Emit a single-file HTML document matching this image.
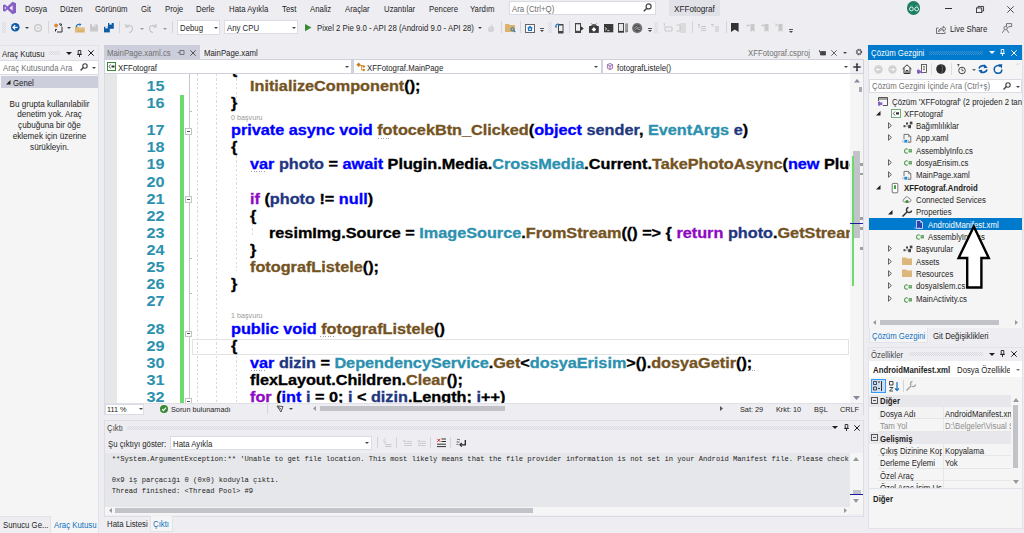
<!DOCTYPE html>
<html><head><meta charset="utf-8">
<style>
*{margin:0;padding:0;box-sizing:border-box}
html,body{width:1024px;height:533px;overflow:hidden;background:#eeeef2;font-family:"Liberation Sans",sans-serif;color:#1e1e1e}
.a{position:absolute}
.t{position:absolute;white-space:nowrap;line-height:1;font-size:8.3px;color:#1e1e1e;transform:translateY(-0.42px) scaleX(0.94);transform-origin:0 0}
.m{font-family:"Liberation Mono",monospace}
.sep{position:absolute;width:1px;background:#d3d4dc}
.grip{position:absolute;width:4px;background:repeating-conic-gradient(#d9dae1 0 25%,transparent 0 50%) 0 0/2px 2px}
.dd{position:absolute;width:0;height:0;border-left:2px solid transparent;border-right:2px solid transparent;border-top:2px solid #444}
svg{position:absolute;overflow:visible}
.cl{position:absolute;white-space:pre;line-height:1;font-weight:bold;font-size:14.1px;-webkit-text-stroke:0.3px currentColor;transform:scaleX(1.152);transform-origin:0 0}
.ln{position:absolute;left:120px;width:44.5px;text-align:right;white-space:pre;line-height:1;font-weight:bold;font-size:14.1px;color:#2b91af;transform:scaleX(1.152);transform-origin:100% 0}
.ob{position:absolute;left:185.4px;width:6.8px;height:6.6px;background:#fff;border:1px solid #c4c4c4}
.ob::after{content:"";position:absolute;left:1px;top:1.8px;width:2.8px;height:1px;background:#555}
.pb{position:absolute;left:870.5px;width:7px;height:7px;border:1px solid #555}
.pb::after{content:"";position:absolute;left:1px;top:2px;width:3px;height:1px;background:#555}
.du{position:absolute;height:1px;background:repeating-linear-gradient(90deg,#a0a0a0 0 1px,transparent 1px 2.6px)}
.gd{position:absolute;width:1px;background:repeating-linear-gradient(#dadada 0 2.2px,transparent 2.2px 4.4px)}

</style></head>
<body>
<!-- MENU BAR -->
<svg style="left:0;top:0" width="20" height="17" viewBox="0 0 20 17"><path d="M12.5 1.8 L16 3.3 V12.7 L12.5 14.2 L7.4 9.4 L4.6 11.7 L3 10.8 V5.2 L4.6 4.3 L7.4 6.6 Z M12.6 5.3 V10.7 L9.5 8 Z M4.8 6.6 V9.4 L6.3 8 Z" fill="#865fc5" fill-rule="evenodd"/></svg>
<div class="t" style="left:24.9px;top:4.6px">Dosya</div>
<div class="t" style="left:59.8px;top:4.6px">Düzen</div>
<div class="t" style="left:94.9px;top:4.6px">Görünüm</div>
<div class="t" style="left:140.8px;top:4.6px">Git</div>
<div class="t" style="left:164.8px;top:4.6px">Proje</div>
<div class="t" style="left:196.4px;top:4.6px">Derle</div>
<div class="t" style="left:228.7px;top:4.6px">Hata Ayıkla</div>
<div class="t" style="left:282.3px;top:4.6px">Test</div>
<div class="t" style="left:310px;top:4.6px">Analiz</div>
<div class="t" style="left:345.2px;top:4.6px">Araçlar</div>
<div class="t" style="left:383.8px;top:4.6px">Uzantılar</div>
<div class="t" style="left:429px;top:4.6px">Pencere</div>
<div class="t" style="left:469.8px;top:4.6px">Yardım</div>
<div class="a" style="left:509px;top:1px;width:147px;height:14px;background:#fff;border:1px solid #dadbe3"></div>
<div class="t" style="left:512px;top:4.6px;color:#6d6d6d">Ara (Ctrl+Q)</div>
<svg style="left:643px;top:3.4px" width="9" height="9" viewBox="0 0 9 9"><circle cx="5.6" cy="3.4" r="2.5" fill="none" stroke="#424242" stroke-width="1.2"/><path d="M3.8 5.2 L0.8 8.2" stroke="#424242" stroke-width="1.5"/></svg>
<div class="a" style="left:669px;top:0;width:51px;height:16px;background:#e1e2e8"></div>
<div class="t" style="left:674px;top:4.6px;font-size:8.7px">XFFotograf</div>
<div class="a" style="left:907px;top:1.3px;width:13.4px;height:13.4px;border-radius:50%;background:#1b7f64"></div>
<svg style="left:907px;top:1px" width="14" height="14" viewBox="0 0 14 14"><circle cx="4.4" cy="8" r="1.9" fill="none" stroke="#fff" stroke-width="0.85"/><circle cx="9.6" cy="8" r="1.9" fill="none" stroke="#fff" stroke-width="0.85"/><path d="M3.6 4.9 H4.2 M4.8 4.9 H5.4 M8.8 4.9 H9.4 M10 4.9 H10.6" stroke="#fff" stroke-width="0.7"/></svg>
<div class="a" style="left:945px;top:8.2px;width:6.8px;height:0.9px;background:#333"></div>
<svg style="left:975.5px;top:5.8px" width="8" height="7" viewBox="0 0 8 7"><rect x="0.45" y="1.95" width="5.3" height="4.6" fill="none" stroke="#333" stroke-width="0.9"/><path d="M2 1.9 V0.45 H7.55 V5 H5.8" fill="none" stroke="#333" stroke-width="0.9"/></svg>
<svg style="left:1007px;top:6.2px" width="7" height="7" viewBox="0 0 7 7"><path d="M0.3 0.3 L6.7 6.7 M6.7 0.3 L0.3 6.7" stroke="#333" stroke-width="0.85"/></svg>

<!-- TOOLBAR -->
<div class="grip" style="left:2px;top:22px;height:11px"></div>
<svg style="left:11.4px;top:23.3px" width="9" height="9" viewBox="0 0 9 9"><circle cx="4.3" cy="4.3" r="4.3" fill="#0e5ca8"/><path d="M2 4.3 H6.6 M4.2 2.1 L2 4.3 L4.2 6.5" fill="none" stroke="#fff" stroke-width="1.2"/></svg>
<div class="dd" style="left:25px;top:27px"></div>
<svg style="left:33.6px;top:23.5px" width="8" height="8" viewBox="0 0 8 8"><circle cx="4" cy="4" r="3.4" fill="none" stroke="#c6c6c6" stroke-width="1.2"/><path d="M2.4 4 H5.6" stroke="#c6c6c6" stroke-width="1"/></svg>
<div class="sep" style="left:47.5px;top:21px;height:12px"></div>
<svg style="left:53.5px;top:22.5px" width="9" height="10" viewBox="0 0 9 10"><circle cx="2.1" cy="2.5" r="1.9" fill="#d9892f"/><path d="M5 1 H7.5 V2.5 M8 4 V9 H3 M1.5 6 V8.5 M1 6.5 H3" fill="none" stroke="#333" stroke-width="1"/><path d="M5.5 1.5 L7.5 3.5" stroke="#333" stroke-width="0.8"/></svg>
<div class="dd" style="left:67.3px;top:27px"></div>
<svg style="left:75px;top:23px" width="10" height="10" viewBox="0 0 10 10"><path d="M0 3.5 H3 L4 4.5 H9.8 V9.5 H0 Z" fill="#dcb36c"/><path d="M0.5 9.3 L2 6 H9.8" fill="none" stroke="#eed9a8" stroke-width="0.6"/><path d="M1.3 4 C1.3 2 3 1 5 1.5" fill="none" stroke="#1c75c4" stroke-width="1.1"/><path d="M4.5 0 L6.5 1.6 L4.5 3.2 Z" fill="#1c75c4"/></svg>
<svg style="left:90.4px;top:23.9px" width="8" height="8" viewBox="0 0 8 8"><path d="M0 0 H6.5 L8 1.5 V7.6 H0 Z" fill="#c9c9c9"/><rect x="2" y="0" width="3.5" height="2.5" fill="#eeeef2"/><rect x="4.3" y="0.5" width="0.8" height="1.5" fill="#c9c9c9"/></svg>
<svg style="left:104px;top:23px" width="10" height="10" viewBox="0 0 10 10"><path d="M4 0 H9.8 V5.8 H4 Z" fill="#0e5ca8"/><path d="M0 3.8 H5.8 V9.4 H0 Z" fill="#0e5ca8"/><rect x="5.3" y="0" width="2.4" height="1.6" fill="#eeeef2"/><rect x="1.3" y="3.8" width="2.4" height="1.6" fill="#eeeef2"/></svg>
<div class="sep" style="left:118.6px;top:21px;height:12px"></div>
<svg style="left:124.5px;top:23px" width="9" height="10" viewBox="0 0 9 10"><path d="M1 1 V4 H4 M1.3 3.8 C3 1.5 7.5 2 7.5 5.5 C7.5 7.5 6 9 4 9.5" fill="none" stroke="#c4c4c4" stroke-width="1.1"/></svg>
<div class="dd" style="left:139.8px;top:28px;border-top-color:#999"></div>
<svg style="left:148px;top:23px" width="9" height="10" viewBox="0 0 9 10"><path d="M8 1 V4 H5 M7.7 3.8 C6 1.5 1.5 2 1.5 5.5 C1.5 7.5 3 9 5 9.5" fill="none" stroke="#c4c4c4" stroke-width="1.1"/></svg>
<div class="dd" style="left:163.3px;top:28px;border-top-color:#999"></div>
<div class="sep" style="left:171.6px;top:21px;height:12px"></div>
<div class="a" style="left:176.6px;top:20.4px;width:43px;height:14.2px;background:#fff;border:1px solid #dadbe3"></div>
<div class="t" style="left:179.8px;top:24px">Debug</div>
<div class="dd" style="left:213.5px;top:27px"></div>
<div class="a" style="left:224.4px;top:20.4px;width:74px;height:14px;background:#fff;border:1px solid #dadbe3"></div>
<div class="t" style="left:227px;top:24px">Any CPU</div>
<div class="dd" style="left:291.7px;top:27px"></div>
<svg style="left:305px;top:23.9px" width="7" height="8" viewBox="0 0 7 8"><path d="M0 0 L6.5 3.6 L0 7.2 Z" fill="#388a34"/></svg>
<div class="t" style="left:316.7px;top:24px">Pixel 2 Pie 9.0 - API 28 (Android 9.0 - API 28)</div>
<div class="dd" style="left:477.8px;top:27px"></div>
<svg style="left:487px;top:23px" width="8" height="10" viewBox="0 0 8 10"><path d="M4 0 C5 3 8 4 7 7.5 C6.5 9.5 1.5 9.5 1 7.5 C0.5 5.5 2 4.5 2.5 3 C3.5 5 4.5 3 4 0Z" fill="#d4d4d6"/></svg>
<div class="sep" style="left:500.9px;top:21px;height:12px"></div>
<svg style="left:505px;top:23px" width="11" height="10" viewBox="0 0 11 10"><path d="M0 1 H4 L5 2 H10 V9 H0 Z" fill="#dcb36c"/><circle cx="7.5" cy="6.3" r="1.6" fill="none" stroke="#1c75c4" stroke-width="1"/><path d="M8.6 7.4 L10.2 9" stroke="#1c75c4" stroke-width="1.2"/></svg>
<div class="sep" style="left:520.3px;top:21px;height:12px"></div>
<svg style="left:525px;top:23.5px" width="10" height="9" viewBox="0 0 10 9"><rect x="0.5" y="0.5" width="9" height="8" fill="#f5f5f5" stroke="#666" stroke-width="1"/><path d="M5 1.8 L8 4.3 H7 V7 H3 V4.3 H2 Z" fill="#1c75c4"/><rect x="4" y="4.5" width="2" height="1.2" fill="#fff"/></svg>
<div class="a" style="left:540px;top:28px;width:4px;height:1px;background:#555"></div>
<div class="dd" style="left:540px;top:30px"></div>
<div class="grip" style="left:547.6px;top:22px;height:11px"></div>
<svg style="left:554.6px;top:22.5px" width="9" height="11" viewBox="0 0 9 11"><rect x="3" y="1" width="5.5" height="9.5" fill="#444"/><rect x="4" y="2.5" width="3.5" height="5.5" fill="#eee"/><path d="M0.8 4 C0.5 1.5 2.5 0.5 4 1.5" fill="none" stroke="#1c75c4" stroke-width="1.2"/><path d="M0 3.5 L1 5.2 L2.2 3.5 Z" fill="#1c75c4"/></svg>
<div class="sep" style="left:569.4px;top:21px;height:12px"></div>
<svg style="left:575px;top:23px" width="9" height="10" viewBox="0 0 9 10"><rect x="0" y="0" width="6" height="10" fill="#444"/><rect x="1" y="1.3" width="4" height="6.5" fill="#eee"/><path d="M5.5 3 L8.8 5.5 L5.5 8 Z" fill="#333"/></svg>
<svg style="left:589px;top:22.8px" width="10" height="10" viewBox="0 0 10 10"><path d="M2.2 0.3 L3.2 1.5 M7.8 0.3 L6.8 1.5 M2.3 2.8 C2.8 1 7.2 1 7.7 2.8 Z" fill="#444" stroke="#444" stroke-width="0.6"/><rect x="0" y="3" width="9.8" height="6.9" fill="#3a3a3a"/><path d="M4.9 4 L7.2 6.4 L4.9 8.8 L2.6 6.4 Z" fill="#fff"/></svg>
<svg style="left:604px;top:24.4px" width="9.5" height="8.5" viewBox="0 0 9.5 8.5"><rect x="0" y="0" width="9.3" height="8.3" fill="#3a3a3a"/><path d="M1.1 3.6 L2.7 4.9 L1.1 6.2 M3.3 6.6 H5.3" stroke="#fff" stroke-width="0.8" fill="none"/></svg>
<svg style="left:618px;top:23px" width="11" height="10" viewBox="0 0 11 10"><rect x="0" y="0" width="6" height="9.7" fill="#3a3a3a"/><rect x="0.9" y="0.9" width="4.2" height="7" fill="#e6e6e8"/><path d="M7.2 0.5 H10 V9 L7.2 9.5 Z" fill="#888"/><path d="M7.8 2 H9.5 M7.8 4 H9.5 M7.8 6 H9.5" stroke="#ddd" stroke-width="0.6"/></svg>
<svg style="left:632.2px;top:22.8px" width="11" height="11" viewBox="0 0 11 11"><circle cx="5.2" cy="5.2" r="5.1" fill="#777"/><circle cx="5.2" cy="5.2" r="3.6" fill="#555"/><path d="M2.2 5.5 L4.5 3.2 L6.5 5.2 L8.2 3.5 M2.8 7.2 L5 5 L7 7 L8.5 5.5" fill="none" stroke="#bbb" stroke-width="0.7"/></svg>
<div class="a" style="left:647.7px;top:28px;width:4px;height:1px;background:#555"></div>
<div class="dd" style="left:647.7px;top:30px"></div>
<div class="grip" style="left:654.4px;top:22px;height:11px"></div>
<svg style="left:662.7px;top:23px" width="10" height="10" viewBox="0 0 10 10"><path d="M1 0 L1.5 3 M2 4 H9 V8 H2 Z" fill="none" stroke="#c8c8c8" stroke-width="1"/></svg>
<svg style="left:676.4px;top:23px" width="11" height="10" viewBox="0 0 11 10"><path d="M0.5 2 H4 V8 H0.5 M5 0 V10 M6 1 H10 M6 3 H10 M6 5 H10 M6 7 H10 M6 9 H10" fill="none" stroke="#c8c8c8" stroke-width="1"/></svg>
<div class="sep" style="left:691.7px;top:21px;height:12px"></div>
<svg style="left:698.4px;top:24px" width="8" height="8" viewBox="0 0 8 8"><path d="M0 0.5 H2 M3 2.5 H8 M3 4.5 H8 M3 6.5 H8 M1 1 V4" stroke="#c8c8c8" stroke-width="1"/></svg>
<svg style="left:711px;top:24px" width="8" height="8" viewBox="0 0 8 8"><path d="M0 0.5 H3 M4 3 H8 M4 5 H8 M4 7 H8 M1 1.5 L2.5 3" stroke="#c8c8c8" stroke-width="1"/></svg>
<div class="sep" style="left:725.7px;top:21px;height:12px"></div>
<svg style="left:731.4px;top:23px" width="8" height="9" viewBox="0 0 8 9"><path d="M0 0 H7.6 V9 L3.8 6.5 L0 9 Z" fill="#333"/></svg>
<svg style="left:747.3px;top:23px" width="8" height="9" viewBox="0 0 8 9"><path d="M3.5 1 H7.5 V9 L5.5 7.5 L3.5 9 Z" fill="#c8c8c8"/><path d="M0 2.5 H3 M1.3 1 L0 2.5 L1.3 4" stroke="#c8c8c8" stroke-width="0.9" fill="none"/></svg>
<svg style="left:761.2px;top:23px" width="8" height="9" viewBox="0 0 8 9"><path d="M3.5 1 H7.5 V9 L5.5 7.5 L3.5 9 Z" fill="#c8c8c8"/><path d="M0 2.5 H3 M1.7 1 L3 2.5 L1.7 4" stroke="#c8c8c8" stroke-width="0.9" fill="none"/></svg>
<svg style="left:775.2px;top:23px" width="8" height="9" viewBox="0 0 8 9"><path d="M3.5 1 H7.5 V9 L5.5 7.5 L3.5 9 Z" fill="#c8c8c8"/><path d="M0 0.5 L3 3.5 M3 0.5 L0 3.5" stroke="#c8c8c8" stroke-width="0.9"/></svg>
<div class="a" style="left:789.4px;top:28.5px;width:4px;height:1px;background:#555"></div>
<div class="dd" style="left:789.4px;top:30.5px"></div>
<svg style="left:936px;top:24.5px" width="11" height="9" viewBox="0 0 11 9"><path d="M2.5 3 H0.5 V8.5 H9 V6.5" fill="none" stroke="#555" stroke-width="0.8"/><path d="M2.5 6.8 C2.8 4 4.8 3 7.3 3 V1.2 L10 3.8 L7.3 6.4 V4.6 C5.5 4.6 3.8 5.3 2.5 6.8 Z" fill="none" stroke="#555" stroke-width="0.8"/></svg>
<div class="t" style="left:950px;top:25.3px">Live Share</div>
<svg style="left:1002px;top:23px" width="10" height="10" viewBox="0 0 10 10"><circle cx="3.6" cy="5" r="1.7" fill="none" stroke="#555" stroke-width="0.8"/><path d="M0.3 9.8 L2.5 6.6 M6.9 9.8 L4.7 6.6" stroke="#555" stroke-width="0.8"/><path d="M4.5 3.2 V0.6 H9.6 V3.6 H7 L5.8 4.6" fill="none" stroke="#555" stroke-width="0.8"/></svg>


<!-- LEFT PANEL -->
<div class="a" style="left:0;top:45px;width:99px;height:472px;background:#f5f5f5;border:1px solid #e2e3ea;border-left:0"></div>
<div class="a" style="left:0;top:46px;width:98px;height:14px;background:#eeeef2"></div>
<div class="t" style="left:2.2px;top:49.5px">Araç Kutusu</div>
<div class="grip" style="left:49px;top:51px;height:4px;width:11px"></div>
<div class="dd" style="left:65.5px;top:51.5px;border-width:3px 3px 0 3px;border-top-color:#1e1e1e"></div>
<svg style="left:76.8px;top:49.5px" width="5" height="7" viewBox="0 0 5 7"><path d="M1.2 0.5 H3.8 V4.3 H1.2 Z M0.2 4.5 H4.8 M2.5 4.5 V7" fill="none" stroke="#1e1e1e" stroke-width="0.9"/></svg>
<svg style="left:88.1px;top:50.1px" width="6" height="6" viewBox="0 0 6 6"><path d="M0.3 0.3 L5.7 5.7 M5.7 0.3 L0.3 5.7" stroke="#1e1e1e" stroke-width="1"/></svg>
<div class="a" style="left:0;top:60px;width:99px;height:14.5px;background:#fff;border:1px solid #dadbe3;border-left:0"></div>
<div class="t" style="left:2.5px;top:63.8px;color:#717171">Araç Kutusunda Ara</div>
<svg style="left:80px;top:63px" width="8" height="8" viewBox="0 0 8 8"><circle cx="5" cy="3" r="2.2" fill="none" stroke="#424242" stroke-width="1.1"/><path d="M3.4 4.6 L0.6 7.4" stroke="#424242" stroke-width="1.4"/></svg>
<div class="dd" style="left:92px;top:67px"></div>
<div class="a" style="left:1px;top:76px;width:97px;height:12.2px;background:#cccedb"></div>
<svg style="left:5.5px;top:80px" width="5" height="5" viewBox="0 0 5 5"><path d="M4.5 0 V4.5 H0 Z" fill="#1e1e1e"/></svg>
<div class="t" style="left:12.8px;top:79.3px">Genel</div>
<div class="a" style="left:0;top:99.6px;width:99px;text-align:center;font-size:8.15px;line-height:10.75px;color:#1e1e1e">Bu grupta kullanılabilir<br>denetim yok. Araç<br>çubuğuna bir öğe<br>eklemek için üzerine<br>sürükleyin.</div>
<div class="a" style="left:0;top:516.7px;width:50.5px;height:17px;background:#eeeef2;border-right:1px solid #e2e3ea"></div>
<div class="t" style="left:3px;top:520.5px;color:#1e1e1e">Sunucu Ge...</div>
<div class="a" style="left:50.5px;top:516px;width:48.5px;height:17px;background:#f5f5f5;border-right:1px solid #e2e3ea"></div>
<div class="t" style="left:53.5px;top:520.5px;color:#0e70c0">Araç Kutusu</div>
<!-- EDITOR -->
<div class="a" style="left:104px;top:45px;width:96px;height:14.5px;background:#cccedb"></div>
<div class="t" style="left:107px;top:48.8px;color:#717171">MainPage.xaml.cs</div>
<svg style="left:177px;top:49px" width="8" height="7" viewBox="0 0 8 7"><path d="M0.5 3.5 H3 M3 1 V6 M3 1.5 H7 V5.5 H3" fill="none" stroke="#6d6d6d" stroke-width="0.9"/></svg>
<svg style="left:190.1px;top:49.6px" width="6" height="6" viewBox="0 0 6 6"><path d="M0.3 0.3 L5.7 5.7 M5.7 0.3 L0.3 5.7" stroke="#555" stroke-width="1"/></svg>
<div class="t" style="left:203.7px;top:48.8px">MainPage.xaml</div>
<div class="t" style="left:748px;top:48.8px;color:#717171">XFFotograf.csproj</div>
<svg style="left:818.5px;top:49.5px" width="7" height="6" viewBox="0 0 7 6"><path d="M0.5 0 V2.5 M1.5 1.5 H6.5 V5 H1.5 Z" fill="#444" stroke="#444" stroke-width="0.8"/></svg>
<svg style="left:831px;top:49.5px" width="6" height="6" viewBox="0 0 6 6"><path d="M0.3 0.3 L5.7 5.7 M5.7 0.3 L0.3 5.7" stroke="#555" stroke-width="0.9"/></svg>
<div class="dd" style="left:843.2px;top:51.8px;border-width:2.5px 2.5px 0 2.5px;border-top-color:#444"></div>
<svg style="left:854.5px;top:48px" width="8" height="8" viewBox="0 0 8 8"><circle cx="4" cy="4" r="2.5" fill="none" stroke="#555" stroke-width="1.4" stroke-dasharray="1.3 0.7"/><circle cx="4" cy="4" r="1.9" fill="none" stroke="#555" stroke-width="0.7"/></svg>
<!-- editor frame -->
<div class="a" style="left:103.5px;top:59px;width:760.5px;height:356px;background:#fff;border:1px solid #d9dae2"></div>
<!-- nav bar -->
<div class="a" style="left:103.5px;top:59px;width:760.5px;height:15px;background:#cfd1dc;border:1px solid #cfd1dc"></div>
<div class="a" style="left:850.3px;top:60px;width:13px;height:13.2px;background:#f0f0f4"></div>
<div class="a" style="left:105px;top:60px;width:245.5px;height:13.2px;background:#fff"></div>
<div class="a" style="left:353.5px;top:60px;width:247.5px;height:13.2px;background:#fff"></div>
<div class="a" style="left:603px;top:60px;width:247.3px;height:13.2px;background:#fff"></div>
<svg style="left:107px;top:62px" width="9" height="9" viewBox="0 0 9 9"><rect x="0.5" y="0.5" width="8" height="8" fill="#fff" stroke="#388a34" stroke-width="1"/><path d="M3.5 2.5 L2 4.5 L3.5 6.5" fill="none" stroke="#333" stroke-width="0.8"/><rect x="4.5" y="3.5" width="3" height="2" fill="#333"/></svg>
<div class="t" style="left:118px;top:63.5px">XFFotograf</div>
<div class="dd" style="left:345px;top:66px"></div>
<svg style="left:356px;top:61.5px" width="10" height="10" viewBox="0 0 10 10"><path d="M2.6 0.6 L4.8 2.8 L2.6 5 L0.4 2.8 Z M7.8 3 L9.3 4.5 L7.8 6 L6.3 4.5 Z M7.8 6.5 L9.3 8 L7.8 9.5 L6.3 8 Z" fill="#c98018"/><path d="M4.2 3.5 H7 M5.6 3.5 V8 H7" fill="none" stroke="#c98018" stroke-width="0.8"/></svg>
<div class="t" style="left:366.6px;top:63.5px">XFFotograf.MainPage</div>
<div class="dd" style="left:594px;top:66px"></div>
<svg style="left:606.5px;top:63px" width="6" height="7" viewBox="0 0 6 7"><path d="M3 0.4 L5.6 1.7 V5.3 L3 6.6 L0.4 5.3 V1.7 Z M0.4 1.7 L3 3 L5.6 1.7 M3 3 V6.6" fill="#efe4f7" stroke="#6c2d8a" stroke-width="0.6"/></svg>
<div class="t" style="left:616.6px;top:63.5px">fotografListele()</div>
<div class="dd" style="left:843.5px;top:66px"></div>
<svg style="left:852.5px;top:63px" width="8" height="8.5" viewBox="0 0 8 8.5"><path d="M4 0.8 V7.7 M0.3 4.1 H7.7" fill="none" stroke="#333" stroke-width="1.5"/><path d="M2.6 1.6 L4 0 L5.4 1.6 Z M2.6 6.9 L4 8.5 L5.4 6.9 Z" fill="#333"/></svg>
<!-- gutter -->
<div class="a" style="left:105px;top:74px;width:12px;height:329px;background:#e6e7e8"></div>
<div class="a" style="left:179.8px;top:94.9px;width:3.8px;height:308px;background:#6bdc6b"></div>
<div class="a" style="left:188.5px;top:74px;width:1.3px;height:329px;background:#c8c8c8"></div>
<div class="a" style="left:189px;top:111.4px;width:3px;height:1px;background:#c0c0c0"></div>
<div class="a" style="left:189px;top:293px;width:3px;height:1px;background:#c0c0c0"></div>
<div class="ob" style="top:128.1px"></div>
<div class="ob" style="top:196.3px"></div>
<div class="ob" style="top:330.5px"></div>
<div class="ob" style="top:398.2px"></div>
<div class="a" style="left:189px;top:258.3px;width:3px;height:1px;background:#c0c0c0"></div>
<!-- guides -->
<div class="gd" style="left:196.9px;top:74px;height:329px"></div>
<div class="gd" style="left:215.5px;top:74px;height:329px"></div>
<div class="gd" style="left:235.6px;top:74px;height:30px"></div>
<div class="gd" style="left:235.6px;top:156px;height:115px"></div>
<div class="gd" style="left:252px;top:224px;height:13px"></div>
<div class="gd" style="left:235.6px;top:356px;height:47px"></div>
<!-- vertical scrollbar -->
<div class="a" style="left:850.3px;top:74px;width:13px;height:329px;background:#f5f5f5"></div>
<svg style="left:853.8px;top:79px" width="6" height="3.5" viewBox="0 0 6 3.5"><path d="M0 3.5 L3 0 L6 3.5 Z" fill="#868999"/></svg>
<svg style="left:853px;top:396px" width="7" height="4" viewBox="0 0 7 4"><path d="M0 0 L3.5 4 L7 0 Z" fill="#868999"/></svg>
<div class="a" style="left:859px;top:86.5px;width:3px;height:5.7px;background:#a8a8ae"></div>
<div class="a" style="left:852.9px;top:150.7px;width:7px;height:87.8px;background:#c2c3c9"></div>
<div class="a" style="left:852px;top:155.5px;width:2px;height:130.5px;background:#6bdc6b"></div>
<div class="a" style="left:850px;top:222.5px;width:13px;height:1.3px;background:#1a1aa6"></div>
<div class="a" style="left:859.5px;top:163px;width:3px;height:2.5px;background:#a0a0a0"></div>
<div class="a" style="left:859.5px;top:172.5px;width:3px;height:2.5px;background:#a0a0a0"></div>
<div class="a" style="left:859.5px;top:217px;width:3px;height:2.5px;background:#a0a0a0"></div>
<div class="a" style="left:859.5px;top:227px;width:3px;height:2.5px;background:#a0a0a0"></div>
<div class="a" style="left:859.5px;top:247px;width:3px;height:2.5px;background:#a0a0a0"></div>
<!-- status row -->
<div class="a" style="left:105px;top:402.5px;width:758px;height:12px;background:#eeeef2;border-top:1px solid #e0e0e6"></div>
<div class="a" style="left:104.5px;top:403.5px;width:39px;height:11px;background:#fff;border:1px solid #dadbe3"></div>
<div class="t" style="left:106.5px;top:406px;font-size:7.75px">111 %</div>
<div class="dd" style="left:138.5px;top:408px"></div>
<svg style="left:160px;top:404.5px" width="8" height="8" viewBox="0 0 8 8"><circle cx="4" cy="4" r="4" fill="#388a34"/><path d="M2 4.2 L3.4 5.6 L6 2.6" fill="none" stroke="#fff" stroke-width="1.1"/></svg>
<div class="t" style="left:171px;top:406px;font-size:7.75px">Sorun bulunamadı</div>
<div class="sep" style="left:267.4px;top:404px;height:10px"></div>
<svg style="left:276px;top:404.5px" width="8" height="8" viewBox="0 0 8 8"><path d="M1 1 L7 1.5 L5 7 Z" fill="none" stroke="#444" stroke-width="0.9"/><path d="M2 2 L5 4" stroke="#444" stroke-width="0.9"/></svg>
<div class="dd" style="left:289px;top:408px"></div>
<svg style="left:313px;top:406px" width="3" height="5" viewBox="0 0 3 5"><path d="M3 0 L0 2.5 L3 5 Z" fill="#999"/></svg>
<div class="a" style="left:319.5px;top:406.3px;width:185.5px;height:5px;background:#c2c3c9"></div>
<svg style="left:719.5px;top:406px" width="3" height="5" viewBox="0 0 3 5"><path d="M0 0 L3 2.5 L0 5 Z" fill="#555"/></svg>
<div class="t" style="left:740.3px;top:405.8px;font-size:7.75px">Sat: 29</div>
<div class="t" style="left:775.7px;top:405.8px;font-size:7.75px">Krkt: 10</div>
<div class="t" style="left:814.4px;top:405.8px;font-size:7.75px">BŞL</div>
<div class="t" style="left:839.7px;top:405.8px;font-size:7.75px">CRLF</div>

<div class="a" style="left:192px;top:74px;width:658px;height:328.5px;overflow:hidden">
<div class="a" style="left:0;top:265.0px;width:657px;height:15.5px;border:1px solid #e3e3e3"></div>
<div class="cl" style="left:39.0px;top:-11.94px"><span style="color:#000000">{</span></div>
<div class="cl" style="left:58.4px;top:4.66px"><span style="color:#74531f">InitializeComponent</span><span style="color:#000000">();</span></div>
<div class="cl" style="left:39.0px;top:21.76px"><span style="color:#000000">}</span></div>
<div class="cl" style="left:39.0px;top:49.26px"><span style="color:#0000ff">private async void </span><span style="color:#74531f">fotocekBtn_Clicked</span><span style="color:#000000">(</span><span style="color:#0000ff">object</span><span style="color:#1f377f"> sender</span><span style="color:#000000">, </span><span style="color:#2b91af">EventArgs</span><span style="color:#1f377f"> e</span><span style="color:#000000">)</span></div>
<div class="cl" style="left:39.0px;top:66.36px"><span style="color:#000000">{</span></div>
<div class="cl" style="left:58.4px;top:83.46px"><span style="color:#0000ff">var</span><span style="color:#1f377f"> photo</span><span style="color:#000000"> = </span><span style="color:#0000ff">await</span><span style="color:#000000"> Plugin.Media.</span><span style="color:#2b91af">CrossMedia</span><span style="color:#000000">.Current.</span><span style="color:#74531f">TakePhotoAsync</span><span style="color:#000000">(</span><span style="color:#0000ff">new</span><span style="color:#000000"> PluginMedia</span></div>
<div class="cl" style="left:58.4px;top:117.66px"><span style="color:#8f08c4">if</span><span style="color:#000000"> (</span><span style="color:#1f377f">photo</span><span style="color:#000000"> != </span><span style="color:#0000ff">null</span><span style="color:#000000">)</span></div>
<div class="cl" style="left:58.4px;top:134.76px"><span style="color:#000000">{</span></div>
<div class="cl" style="left:77.0px;top:151.86px"><span style="color:#000000">resimImg.Source = </span><span style="color:#2b91af">ImageSource</span><span style="color:#000000">.</span><span style="color:#74531f">FromStream</span><span style="color:#000000">(() =&gt; { </span><span style="color:#8f08c4">return</span><span style="color:#1f377f"> photo</span><span style="color:#000000">.</span><span style="color:#74531f">GetStream</span><span style="color:#000000">());</span></div>
<div class="cl" style="left:58.4px;top:168.96px"><span style="color:#000000">}</span></div>
<div class="cl" style="left:58.4px;top:186.06px"><span style="color:#74531f">fotografListele</span><span style="color:#000000">();</span></div>
<div class="cl" style="left:39.0px;top:203.16px"><span style="color:#000000">}</span></div>
<div class="cl" style="left:39.0px;top:247.76px"><span style="color:#0000ff">public void </span><span style="color:#74531f">fotografListele</span><span style="color:#000000">()</span></div>
<div class="cl" style="left:39.0px;top:264.86px"><span style="color:#000000">{</span></div>
<div class="cl" style="left:58.4px;top:281.96px"><span style="color:#0000ff">var</span><span style="color:#1f377f"> dizin</span><span style="color:#000000"> = </span><span style="color:#2b91af">DependencyService</span><span style="color:#000000">.</span><span style="color:#74531f">Get</span><span style="color:#000000">&lt;</span><span style="color:#2b91af">dosyaErisim</span><span style="color:#000000">&gt;().</span><span style="color:#74531f">dosyaGetir</span><span style="color:#000000">();</span></div>
<div class="cl" style="left:58.4px;top:299.06px"><span style="color:#000000">flexLayout.Children.</span><span style="color:#74531f">Clear</span><span style="color:#000000">();</span></div>
<div class="cl" style="left:58.4px;top:316.16px"><span style="color:#8f08c4">for</span><span style="color:#000000"> (</span><span style="color:#0000ff">int</span><span style="color:#1f377f"> i</span><span style="color:#000000"> = 0; </span><span style="color:#1f377f">i</span><span style="color:#000000"> &lt; </span><span style="color:#1f377f">dizin</span><span style="color:#000000">.Length; </span><span style="color:#1f377f">i</span><span style="color:#000000">++)</span></div>
</div>
<div class="ln" style="top:78.66px">15</div>
<div class="ln" style="top:95.76px">16</div>
<div class="ln" style="top:123.26px">17</div>
<div class="ln" style="top:140.36px">18</div>
<div class="ln" style="top:157.46px">19</div>
<div class="ln" style="top:174.56px">20</div>
<div class="ln" style="top:191.66px">21</div>
<div class="ln" style="top:208.76px">22</div>
<div class="ln" style="top:225.86px">23</div>
<div class="ln" style="top:242.96px">24</div>
<div class="ln" style="top:260.06px">25</div>
<div class="ln" style="top:277.16px">26</div>
<div class="ln" style="top:294.26px">27</div>
<div class="ln" style="top:321.76px">28</div>
<div class="ln" style="top:338.86px">29</div>
<div class="ln" style="top:355.96px">30</div>
<div class="ln" style="top:373.06px">31</div>
<div class="ln" style="top:390.16px">32</div>
<div class="du" style="left:377.8px;top:137.5px;width:13.5px"></div>
<div class="du" style="left:250.5px;top:171.4px;width:16.5px"></div>
<div class="du" style="left:320px;top:336px;width:13.5px"></div>
<div class="du" style="left:250.5px;top:370px;width:16.5px"></div>
<div class="du" style="left:749px;top:370px;width:8px"></div>
<!-- OUTPUT PANEL -->
<div class="a" style="left:231px;top:113.6px;font-size:7.2px;line-height:1;color:#9a9a9a;white-space:nowrap">0 başvuru</div>
<div class="a" style="left:231px;top:312px;font-size:7.2px;line-height:1;color:#9a9a9a;white-space:nowrap">1 başvuru</div>
<div class="a" style="left:104px;top:419.5px;width:760px;height:97.5px;background:#eeeef2;border:1px solid #dcdde5"></div>
<div class="t" style="left:107px;top:424px;color:#444">Çıktı</div>
<div class="grip" style="left:127px;top:425.5px;height:4px;width:706px"></div>
<div class="dd" style="left:832px;top:426px;border-width:3px 3px 0 3px;border-top-color:#1e1e1e"></div>
<svg style="left:843.8px;top:424.0px" width="5" height="7" viewBox="0 0 5 7"><path d="M1.2 0.5 H3.8 V4.3 H1.2 Z M0.2 4.5 H4.8 M2.5 4.5 V7" fill="none" stroke="#1e1e1e" stroke-width="0.9"/></svg>
<svg style="left:854.1px;top:424.6px" width="6" height="6" viewBox="0 0 6 6"><path d="M0.3 0.3 L5.7 5.7 M5.7 0.3 L0.3 5.7" stroke="#1e1e1e" stroke-width="1"/></svg>
<div class="t" style="left:108px;top:439.5px">Şu çıktıyı göster:</div>
<div class="a" style="left:170px;top:436px;width:202px;height:13.5px;background:#fff;border:1px solid #dadbe3"></div>
<div class="t" style="left:173px;top:439.5px">Hata Ayıkla</div>
<div class="dd" style="left:365px;top:442px"></div>
<div class="sep" style="left:376.5px;top:437px;height:11px"></div>
<svg style="left:383px;top:437.5px" width="9" height="10" viewBox="0 0 9 10"><path d="M2.5 0.5 C0.5 1 0.5 4 2.5 4.5 M1.5 3.2 L2.8 4.5 L1.5 5.8" fill="none" stroke="#c8c8c8" stroke-width="0.9"/><path d="M2.5 6.5 H8.5 M2.5 8.5 H8.5" stroke="#c8c8c8" stroke-width="1"/></svg>
<div class="sep" style="left:396px;top:437px;height:11px"></div>
<svg style="left:402.5px;top:438px" width="9" height="9" viewBox="0 0 9 9"><path d="M3 3 H0.5 M1.8 1.7 L0.5 3 L1.8 4.3 M1 5.5 H9 M1 7.5 H9 M3.5 3.5 H9" fill="none" stroke="#c8c8c8" stroke-width="0.9"/></svg>
<svg style="left:416.5px;top:438px" width="9" height="9" viewBox="0 0 9 9"><path d="M0.5 3 H3 M1.7 1.7 L3 3 L1.7 4.3 M1 5.5 H9 M1 7.5 H9 M3.5 3.5 H9" fill="none" stroke="#c8c8c8" stroke-width="0.9"/></svg>
<div class="sep" style="left:429.5px;top:437px;height:11px"></div>
<svg style="left:436.5px;top:437.5px" width="9" height="10" viewBox="0 0 9 10"><path d="M0.3 0.8 L3.3 3.8 M3.3 0.8 L0.3 3.8" stroke="#d42a1a" stroke-width="1"/><path d="M4.5 1 H9 M4.5 3.5 H9 M0 6.2 H9 M0 8.6 H9" stroke="#333" stroke-width="1"/></svg>
<div class="sep" style="left:449.5px;top:437px;height:11px"></div>
<svg style="left:455.5px;top:437.5px" width="10" height="10" viewBox="0 0 10 10"><path d="M1 1.5 C2 0.5 3 2.5 4 1.5 M0.5 4 C1.5 3 2.5 5 3.5 4 M0.5 6.5 C1.5 5.5 2 7 2.5 6.5" fill="none" stroke="#444" stroke-width="0.9"/><path d="M9.3 2 V6.8 H5" fill="none" stroke="#222" stroke-width="1.3"/><path d="M5.8 5 L4 6.8 L5.8 8.6" fill="none" stroke="#222" stroke-width="1.2"/></svg>
<div class="a" style="left:105px;top:452.5px;width:745px;height:54px;background:#e6e7ea"></div>
<div class="a m" style="left:111.7px;top:454px;font-size:7.15px;line-height:10.7px;white-space:pre;color:#1e1e1e">**System.ArgumentException:** 'Unable to get file location. This most likely means that the file provider information is not set in your Android Manifest file. Please check

0x9 iş parçacığı 0 (0x0) koduyla çıktı.
Thread finished: &lt;Thread Pool&gt; #9</div>
<div class="a" style="left:850px;top:452.5px;width:13px;height:61px;background:#f5f5f5"></div>
<svg style="left:853px;top:457px" width="6" height="4" viewBox="0 0 6 4"><path d="M0 4 L3 0 L6 4 Z" fill="#999"/></svg>
<svg style="left:853px;top:499px" width="6" height="4" viewBox="0 0 6 4"><path d="M0 0 L3 4 L6 0 Z" fill="#999"/></svg>
<div class="a" style="left:852.5px;top:490px;width:8px;height:4px;background:#c2c3c9"></div>
<div class="a" style="left:850px;top:494px;width:13px;height:1.3px;background:#1a1aa6"></div>
<div class="a" style="left:105px;top:506.5px;width:745px;height:8px;background:#f5f5f5"></div>
<svg style="left:108.5px;top:508px" width="3" height="5" viewBox="0 0 3 5"><path d="M3 0 L0 2.5 L3 5 Z" fill="#999"/></svg>
<div class="a" style="left:115px;top:508px;width:418px;height:5px;background:#c2c3c9"></div>
<svg style="left:844px;top:508px" width="3" height="5" viewBox="0 0 3 5"><path d="M0 0 L3 2.5 L0 5 Z" fill="#999"/></svg>
<div class="t" style="left:107px;top:520px">Hata Listesi</div>
<div class="a" style="left:150px;top:516px;width:23px;height:16px;background:#f5f5f5;border:1px solid #e2e3ea;border-top:0"></div>
<div class="t" style="left:153px;top:520px;color:#0e70c0">Çıktı</div>

<!-- SOLUTION EXPLORER -->
<div class="a" style="left:868px;top:45px;width:154.5px;height:300px;background:#f5f5f5;border:1px solid #e2e3ea"></div>
<div class="a" style="left:868.2px;top:45.4px;width:153.8px;height:14.4px;background:#007acc"></div>
<div class="t" style="left:870.6px;top:49.3px;color:#fff">Çözüm Gezgini</div>
<div class="grip" style="left:929px;top:51px;height:4px;width:54px;background:repeating-conic-gradient(#3a8fd2 0 25%,transparent 0 50%) 0 0/2px 2px"></div>
<div class="dd" style="left:988.5px;top:51px;border-width:3px 3px 0 3px;border-top-color:#fff"></div>
<svg style="left:999.8px;top:49.0px" width="5" height="7" viewBox="0 0 5 7"><path d="M1.2 0.5 H3.8 V4.3 H1.2 Z M0.2 4.5 H4.8 M2.5 4.5 V7" fill="none" stroke="#fff" stroke-width="0.9"/></svg>
<svg style="left:1010.6px;top:49.6px" width="6" height="6" viewBox="0 0 6 6"><path d="M0.3 0.3 L5.7 5.7 M5.7 0.3 L0.3 5.7" stroke="#fff" stroke-width="1"/></svg>
<!-- SE toolbar -->
<svg style="left:873.5px;top:64.5px" width="9" height="9" viewBox="0 0 9 9"><circle cx="4.5" cy="4.5" r="4.2" fill="#d2d2d4"/><path d="M6.5 4.5 H2.5 M4.2 2.8 L2.5 4.5 L4.2 6.2" fill="none" stroke="#f5f5f5" stroke-width="1"/></svg>
<svg style="left:888px;top:64.5px" width="9" height="9" viewBox="0 0 9 9"><circle cx="4.5" cy="4.5" r="4.2" fill="#d2d2d4"/><path d="M2.5 4.5 H6.5 M4.8 2.8 L6.5 4.5 L4.8 6.2" fill="none" stroke="#f5f5f5" stroke-width="1"/></svg>
<svg style="left:902px;top:64px" width="10" height="10" viewBox="0 0 10 10"><path d="M0.5 5 L5 0.8 L9.5 5 M2 4 V9.5 H8 V4 M4 9.5 V6.5 H6 V9.5" fill="none" stroke="#333" stroke-width="1"/></svg>
<svg style="left:916.5px;top:63.5px" width="10" height="10" viewBox="0 0 10 10"><rect x="4.5" y="0.5" width="5" height="8" fill="none" stroke="#555" stroke-width="0.9"/><path d="M6 2.5 H8 M6 4 H8 M6 5.5 H8" stroke="#555" stroke-width="0.7"/><path d="M0 6 L1.5 5.2 L3.5 7 L5 6 V9.5 L3.5 8.8 L1.5 10 L0 9 Z" fill="#865fc5"/></svg>
<div class="sep" style="left:931px;top:63px;height:12px;background:#dcdde3"></div>
<svg style="left:936px;top:64px" width="10" height="10" viewBox="0 0 10 10"><circle cx="5" cy="5" r="4.8" fill="#2d2d2d"/><path d="M5 0.5 C7 2 7 8 5 9.5" fill="none" stroke="#777" stroke-width="0.8"/></svg>
<div class="sep" style="left:951px;top:63px;height:12px;background:#dcdde3"></div>
<svg style="left:957px;top:63.5px" width="9" height="11" viewBox="0 0 9 11"><path d="M0.3 0.5 H2.5 M1.4 0.5 V2.5" stroke="#333" stroke-width="0.8"/><circle cx="5" cy="6.5" r="3.3" fill="none" stroke="#333" stroke-width="0.9"/><path d="M5 4.6 V6.7 H6.6" fill="none" stroke="#333" stroke-width="0.8"/></svg>
<div class="dd" style="left:971.5px;top:69px;border-top-color:#666"></div>
<svg style="left:978px;top:63.5px" width="10" height="10" viewBox="0 0 10 10"><path d="M1 4.5 C1.5 1.8 5.5 0.8 7.8 2.6 M9 5.5 C8.5 8.2 4.5 9.2 2.2 7.4" fill="none" stroke="#0e5ca8" stroke-width="1.6"/><path d="M6.2 0.2 L9.8 3.8 L5.8 4.2 Z M3.8 9.8 L0.2 6.2 L4.2 5.8 Z" fill="#0e5ca8"/></svg>
<svg style="left:993px;top:63.5px" width="10" height="10" viewBox="0 0 10 10"><path d="M7.3 2.5 C5.5 0.8 1.2 1.5 1.2 5.3 C1.2 8 3.3 9.3 5.2 9.3 C7.5 9.3 8.8 7.5 8.8 5.5" fill="none" stroke="#0e5ca8" stroke-width="1.5"/><path d="M5.2 0.3 L9.3 0.3 L8.8 4.5 Z" fill="#0e5ca8"/></svg>
<div class="grip" style="left:1016px;top:63px;height:2px;width:4px"></div>
<div class="a" style="left:868.5px;top:78.6px;width:153.5px;height:14px;background:#fff;border:1px solid #dadbe3"></div>
<div class="t" style="left:872px;top:82.3px;color:#717171">Çözüm Gezgini İçinde Ara (Ctrl+ş)</div>
<div class="a" style="left:1004px;top:79.8px;width:17px;height:11.5px;background:#fff"></div>
<svg style="left:1003px;top:81.5px" width="8" height="8" viewBox="0 0 8 8"><circle cx="5" cy="3" r="2.2" fill="none" stroke="#424242" stroke-width="1.1"/><path d="M3.4 4.6 L0.6 7.4" stroke="#424242" stroke-width="1.4"/></svg>
<div class="dd" style="left:1016px;top:85.5px"></div>
<!-- tree -->
<div class="a" style="left:869px;top:93px;width:153px;height:225px;overflow:hidden">
<div class="a" style="left:0;top:125px;width:153px;height:11.8px;background:#007acc"></div>
</div>
<div class="a" style="left:869px;top:93px;width:153px;height:225px;overflow:hidden"><div class="a" style="left:-869px;top:-93px;width:1024px;height:533px">
<svg style="left:878px;top:96.5px" width="10" height="9" viewBox="0 0 10 9"><path d="M0.5 0.5 H9.5 V8.5 H5 M0.5 0.5 V4 M0.5 2 H9.5" fill="none" stroke="#424242" stroke-width="0.9"/><path d="M0 5 L1.3 4.3 L3 5.8 L4.3 5 V8.5 L3 7.8 L1.3 9 L0 8.3 Z" fill="#865fc5"/></svg>
<div class="t" style="left:892.0px;top:97.6px;color:#1e1e1e">Çözüm 'XFFotograf' (2 projeden 2 tanesi)</div>
<svg style="left:875.5px;top:111.0px" width="5" height="5" viewBox="0 0 5 5"><path d="M4.5 0 V4.5 H0 Z" fill="#1e1e1e"/></svg>
<svg style="left:891px;top:108.5px" width="10" height="9" viewBox="0 0 10 9"><rect x="0.5" y="0.5" width="9" height="8" fill="#fff" stroke="#71b074" stroke-width="1"/><path d="M4 2.5 L2.3 4.5 L4 6.5" fill="none" stroke="#333" stroke-width="0.8"/><rect x="5" y="3.3" width="3" height="2.2" fill="#333"/></svg>
<div class="t" style="left:904.0px;top:109.6px;color:#1e1e1e">XFFotograf</div>
<svg style="left:887.5px;top:121.9px" width="4" height="7" viewBox="0 0 4 7"><path d="M0.5 0.7 L3.4 3.5 L0.5 6.3 Z" fill="#e8e8e8" stroke="#555" stroke-width="0.9"/></svg>
<svg style="left:902.5px;top:121.4px" width="10" height="8" viewBox="0 0 10 8"><rect x="0.5" y="4.2" width="2" height="2" fill="#444"/><rect x="3" y="1.5" width="2" height="2" fill="#444"/><rect x="6.8" y="0.6" width="2.6" height="2.8" fill="#444"/><rect x="5.2" y="4" width="2.8" height="3.2" fill="#444"/><path d="M2.5 5.2 H5.2 M4 3.5 L5.5 4.2" stroke="#888" stroke-width="0.6"/></svg>
<div class="t" style="left:916.0px;top:122.0px;color:#1e1e1e">Bağımlılıklar</div>
<svg style="left:887.5px;top:134.3px" width="4" height="7" viewBox="0 0 4 7"><path d="M0.5 0.7 L3.4 3.5 L0.5 6.3 Z" fill="#e8e8e8" stroke="#555" stroke-width="0.9"/></svg>
<svg style="left:902.0px;top:133.8px" width="10" height="9" viewBox="0 0 10 9"><path d="M2 0.4 H6.5 L8.8 2.7 V8.3 H6 M2 0.4 V5" fill="none" stroke="#555" stroke-width="0.8"/><path d="M6.5 0.4 V2.7 H8.8" fill="none" stroke="#555" stroke-width="0.6"/><rect x="2.3" y="5.8" width="3" height="2.8" fill="#1c8ad8"/><path d="M1.6 6 L0.4 7.2 L1.6 8.4 M6 6 L7.2 7.2 L6 8.4" fill="none" stroke="#777" stroke-width="0.6"/></svg>
<div class="t" style="left:916.0px;top:134.4px;color:#1e1e1e">App.xaml</div>
<svg style="left:903.5px;top:147.9px" width="9" height="6" viewBox="0 0 9 6"><path d="M3.6 1.3 C3 0.5 0.5 0.5 0.5 3 C0.5 5.5 3 5.5 3.6 4.7" fill="none" stroke="#4e9a4e" stroke-width="1.1"/><rect x="4.6" y="1.2" width="3.4" height="3.2" fill="#4e9a4e"/><path d="M4.6 2.8 H8" stroke="#cfe6cf" stroke-width="0.5"/></svg>
<div class="t" style="left:916.0px;top:146.5px;color:#1e1e1e">AssemblyInfo.cs</div>
<svg style="left:887.5px;top:158.7px" width="4" height="7" viewBox="0 0 4 7"><path d="M0.5 0.7 L3.4 3.5 L0.5 6.3 Z" fill="#e8e8e8" stroke="#555" stroke-width="0.9"/></svg>
<svg style="left:903.5px;top:160.2px" width="9" height="6" viewBox="0 0 9 6"><path d="M3.6 1.3 C3 0.5 0.5 0.5 0.5 3 C0.5 5.5 3 5.5 3.6 4.7" fill="none" stroke="#4e9a4e" stroke-width="1.1"/><rect x="4.6" y="1.2" width="3.4" height="3.2" fill="#4e9a4e"/><path d="M4.6 2.8 H8" stroke="#cfe6cf" stroke-width="0.5"/></svg>
<div class="t" style="left:916.0px;top:158.8px;color:#1e1e1e">dosyaErisim.cs</div>
<svg style="left:887.5px;top:171.1px" width="4" height="7" viewBox="0 0 4 7"><path d="M0.5 0.7 L3.4 3.5 L0.5 6.3 Z" fill="#e8e8e8" stroke="#555" stroke-width="0.9"/></svg>
<svg style="left:902.0px;top:170.6px" width="10" height="9" viewBox="0 0 10 9"><path d="M2 0.4 H6.5 L8.8 2.7 V8.3 H6 M2 0.4 V5" fill="none" stroke="#555" stroke-width="0.8"/><path d="M6.5 0.4 V2.7 H8.8" fill="none" stroke="#555" stroke-width="0.6"/><rect x="2.3" y="5.8" width="3" height="2.8" fill="#1c8ad8"/><path d="M1.6 6 L0.4 7.2 L1.6 8.4 M6 6 L7.2 7.2 L6 8.4" fill="none" stroke="#777" stroke-width="0.6"/></svg>
<div class="t" style="left:916.0px;top:171.2px;color:#1e1e1e">MainPage.xaml</div>
<svg style="left:875.5px;top:185.1px" width="5" height="5" viewBox="0 0 5 5"><path d="M4.5 0 V4.5 H0 Z" fill="#1e1e1e"/></svg>
<svg style="left:891px;top:182.6px" width="8" height="10" viewBox="0 0 8 10"><rect x="1.2" y="0.4" width="5.6" height="9.4" rx="0.8" fill="#fff" stroke="#555" stroke-width="0.8"/><rect x="3" y="2.2" width="2" height="3.8" fill="#3aa83a"/></svg>
<div class="t" style="left:904.0px;top:183.7px;color:#1e1e1e;font-weight:bold">XFFotograf.Android</div>
<svg style="left:902px;top:194.9px" width="10" height="9" viewBox="0 0 10 9"><path d="M2.5 7 C0.5 7 0.5 4 2.5 4 C2.5 1.5 6.5 1 7 3.5 C9.5 3.5 9.5 7 7.5 7 Z" fill="none" stroke="#777" stroke-width="0.9"/><circle cx="5" cy="6.5" r="1.5" fill="#388a34"/></svg>
<div class="t" style="left:916.0px;top:196.0px;color:#1e1e1e">Connected Services</div>
<svg style="left:887.5px;top:209.6px" width="5" height="5" viewBox="0 0 5 5"><path d="M4.5 0 V4.5 H0 Z" fill="#1e1e1e"/></svg>
<svg style="left:902px;top:207.1px" width="10" height="10" viewBox="0 0 10 10"><path d="M0.5 9.5 L5 5 M6.5 0.5 C4.5 0.5 4 3 5 4.5 L4.5 5.5 L4.5 5.5 M9.5 3.5 C9.5 5.5 7 6 5.5 5" fill="none" stroke="#333" stroke-width="1.5"/></svg>
<div class="t" style="left:916.0px;top:208.2px;color:#1e1e1e">Properties</div>
<svg style="left:914px;top:219.5px" width="9" height="10" viewBox="0 0 9 10"><path d="M2.5 0.5 H6.5 L8.5 2.5 V8.5 H2.5 Z" fill="#2b3fb0" stroke="#e8ecff" stroke-width="0.8"/><path d="M6.5 0.5 V2.5 H8.5" fill="none" stroke="#e8ecff" stroke-width="0.6"/><path d="M1.5 7 L0.5 8 L1.5 9 M4.5 7 L5.5 8 L4.5 9" fill="none" stroke="#cfd8f0" stroke-width="0.6"/></svg>
<div class="t" style="left:928.0px;top:220.6px;color:#ffffff">AndroidManifest.xml</div>
<svg style="left:915.5px;top:234.4px" width="9" height="6" viewBox="0 0 9 6"><path d="M3.6 1.3 C3 0.5 0.5 0.5 0.5 3 C0.5 5.5 3 5.5 3.6 4.7" fill="none" stroke="#4e9a4e" stroke-width="1.1"/><rect x="4.6" y="1.2" width="3.4" height="3.2" fill="#4e9a4e"/><path d="M4.6 2.8 H8" stroke="#cfe6cf" stroke-width="0.5"/></svg>
<div class="t" style="left:928.0px;top:233.0px;color:#1e1e1e">AssemblyInfo.cs</div>
<svg style="left:887.5px;top:245.3px" width="4" height="7" viewBox="0 0 4 7"><path d="M0.5 0.7 L3.4 3.5 L0.5 6.3 Z" fill="#e8e8e8" stroke="#555" stroke-width="0.9"/></svg>
<svg style="left:902.5px;top:244.8px" width="10" height="8" viewBox="0 0 10 8"><rect x="0.5" y="4.2" width="2" height="2" fill="#444"/><rect x="3" y="1.5" width="2" height="2" fill="#444"/><rect x="6.8" y="0.6" width="2.6" height="2.8" fill="#444"/><rect x="5.2" y="4" width="2.8" height="3.2" fill="#444"/><path d="M2.5 5.2 H5.2 M4 3.5 L5.5 4.2" stroke="#888" stroke-width="0.6"/></svg>
<div class="t" style="left:916.0px;top:245.4px;color:#1e1e1e">Başvurular</div>
<svg style="left:887.5px;top:257.6px" width="4" height="7" viewBox="0 0 4 7"><path d="M0.5 0.7 L3.4 3.5 L0.5 6.3 Z" fill="#e8e8e8" stroke="#555" stroke-width="0.9"/></svg>
<svg style="left:902px;top:256.6px" width="10" height="8" viewBox="0 0 10 8"><path d="M0 0.5 H4 L5 1.5 H10 V8 H0 Z" fill="#dcb67a"/></svg>
<div class="t" style="left:916.0px;top:257.7px;color:#1e1e1e">Assets</div>
<svg style="left:887.5px;top:269.9px" width="4" height="7" viewBox="0 0 4 7"><path d="M0.5 0.7 L3.4 3.5 L0.5 6.3 Z" fill="#e8e8e8" stroke="#555" stroke-width="0.9"/></svg>
<svg style="left:902px;top:268.9px" width="10" height="8" viewBox="0 0 10 8"><path d="M0 0.5 H4 L5 1.5 H10 V8 H0 Z" fill="#dcb67a"/></svg>
<div class="t" style="left:916.0px;top:270.0px;color:#1e1e1e">Resources</div>
<svg style="left:887.5px;top:282.2px" width="4" height="7" viewBox="0 0 4 7"><path d="M0.5 0.7 L3.4 3.5 L0.5 6.3 Z" fill="#e8e8e8" stroke="#555" stroke-width="0.9"/></svg>
<svg style="left:903.5px;top:283.7px" width="9" height="6" viewBox="0 0 9 6"><path d="M3.6 1.3 C3 0.5 0.5 0.5 0.5 3 C0.5 5.5 3 5.5 3.6 4.7" fill="none" stroke="#4e9a4e" stroke-width="1.1"/><rect x="4.6" y="1.2" width="3.4" height="3.2" fill="#4e9a4e"/><path d="M4.6 2.8 H8" stroke="#cfe6cf" stroke-width="0.5"/></svg>
<div class="t" style="left:916.0px;top:282.3px;color:#1e1e1e">dosyaIslem.cs</div>
<svg style="left:887.5px;top:295.3px" width="4" height="7" viewBox="0 0 4 7"><path d="M0.5 0.7 L3.4 3.5 L0.5 6.3 Z" fill="#e8e8e8" stroke="#555" stroke-width="0.9"/></svg>
<svg style="left:903.5px;top:296.8px" width="9" height="6" viewBox="0 0 9 6"><path d="M3.6 1.3 C3 0.5 0.5 0.5 0.5 3 C0.5 5.5 3 5.5 3.6 4.7" fill="none" stroke="#4e9a4e" stroke-width="1.1"/><rect x="4.6" y="1.2" width="3.4" height="3.2" fill="#4e9a4e"/><path d="M4.6 2.8 H8" stroke="#cfe6cf" stroke-width="0.5"/></svg>
<div class="t" style="left:916.0px;top:295.4px;color:#1e1e1e">MainActivity.cs</div>
</div></div>

<!-- ARROW ANNOTATION -->
<svg style="left:955px;top:224px" width="36" height="66" viewBox="0 0 36 66"><path d="M18.8 2.5 L33.8 34 H26.4 V63.5 H12.2 V34 H3.6 Z" fill="#fff" stroke="#000" stroke-width="2.4" stroke-linejoin="miter"/></svg>
<!-- SE h-scrollbar & tabs -->
<div class="a" style="left:869px;top:318px;width:153px;height:9px;background:#f5f5f5"></div>
<svg style="left:872.5px;top:320px" width="3" height="5" viewBox="0 0 3 5"><path d="M3 0 L0 2.5 L3 5 Z" fill="#999"/></svg>
<div class="a" style="left:879.7px;top:320.3px;width:119px;height:4.5px;background:#c2c3c9"></div>
<svg style="left:1015px;top:320px" width="3" height="5" viewBox="0 0 3 5"><path d="M0 0 L3 2.5 L0 5 Z" fill="#999"/></svg>
<div class="a" style="left:868px;top:327.5px;width:156px;height:17.5px;background:#eeeef2"></div>
<div class="a" style="left:868.5px;top:327.5px;width:59px;height:15px;background:#f5f5f5;border:1px solid #e2e3ea;border-top:0"></div>
<div class="t" style="left:871.5px;top:331.5px;color:#0e70c0">Çözüm Gezgini</div>
<div class="t" style="left:932.5px;top:331.5px">Git Değişiklikleri</div>
<!-- PROPERTIES -->
<div class="a" style="left:868px;top:346.5px;width:154.5px;height:182px;background:#f5f5f5;border:1px solid #e2e3ea"></div>
<div class="a" style="left:869px;top:347.5px;width:153px;height:13.5px;background:#eeeef2"></div>
<div class="t" style="left:871px;top:350.5px;color:#444">Özellikler</div>
<div class="grip" style="left:909px;top:352px;height:4px;width:74px"></div>
<div class="dd" style="left:988.5px;top:352.5px;border-width:3px 3px 0 3px;border-top-color:#1e1e1e"></div>
<svg style="left:999.8px;top:350.0px" width="5" height="7" viewBox="0 0 5 7"><path d="M1.2 0.5 H3.8 V4.3 H1.2 Z M0.2 4.5 H4.8 M2.5 4.5 V7" fill="none" stroke="#1e1e1e" stroke-width="0.9"/></svg>
<svg style="left:1011.1px;top:350.6px" width="6" height="6" viewBox="0 0 6 6"><path d="M0.3 0.3 L5.7 5.7 M5.7 0.3 L0.3 5.7" stroke="#1e1e1e" stroke-width="1"/></svg>
<div class="a" style="left:869px;top:361px;width:153px;height:16px;background:#fff"></div>
<div class="t" style="left:873px;top:365.5px;font-weight:bold">AndroidManifest.xml</div>
<div class="t" style="left:957px;top:365.5px">Dosya Özellikleri</div>
<div class="a" style="left:1010px;top:362px;width:12px;height:14px;background:#fff"></div>
<div class="dd" style="left:1015.5px;top:368.5px;border-top-color:#777"></div>
<div class="a" style="left:870.5px;top:378.5px;width:15px;height:14.5px;background:#c9def5;border:1px solid #3399ff"></div>
<svg style="left:873px;top:381px" width="10" height="10" viewBox="0 0 10 10"><path d="M0.5 0.5 H3.5 V3.5 H0.5 Z M0.5 6 H3.5 V9 H0.5 Z" fill="none" stroke="#333" stroke-width="0.9"/><path d="M5 1 H7 M5 7.5 H7 M8.5 0 V10" stroke="#333" stroke-width="1"/></svg>
<svg style="left:889px;top:380.5px" width="11" height="11" viewBox="0 0 11 11"><path d="M0.5 0.5 H4 V4 H0.5 Z M0.5 6.5 H4 L0.5 10 H4" fill="none" stroke="#333" stroke-width="0.9"/><path d="M8 1 V9.5 M6 7.5 L8 9.5 L10 7.5" fill="none" stroke="#0e70c0" stroke-width="1.2"/></svg>
<div class="sep" style="left:902.5px;top:379.5px;height:12px"></div>
<svg style="left:906px;top:380.5px" width="10" height="10" viewBox="0 0 10 10"><path d="M0.5 9.5 L5 5 M6.5 0.5 C4.5 0.5 4 3 5 4.5 M9.5 3.5 C9.5 5.5 7 6 5.5 5" fill="none" stroke="#a8a8a8" stroke-width="1.5"/></svg>
<!-- grid -->
<div class="a" style="left:869px;top:394.5px;width:145px;height:93px;background:#f5f5f5"></div>
<div class="a" style="left:869px;top:394.5px;width:142px;height:12.5px;background:#e8e8ec"></div>
<div class="pb" style="top:397px"></div>
<div class="t" style="left:880px;top:397.2px;font-weight:bold">Diğer</div>
<div class="a" style="left:878px;top:407px;width:136px;height:12.3px;background:#f3f3f3;border-bottom:1px solid #e6e6e6"></div>
<div class="a" style="left:878px;top:419.3px;width:136px;height:12.3px;background:#f5f5f5;border-bottom:1px solid #e6e6e6"></div>
<div class="a" style="left:869px;top:431.6px;width:142px;height:12.4px;background:#e8e8ec"></div>
<div class="pb" style="top:434.3px"></div>
<div class="t" style="left:880px;top:434.5px;font-weight:bold">Gelişmiş</div>
<div class="a" style="left:878px;top:444px;width:136px;height:12.3px;border-bottom:1px solid #e6e6e6"></div>
<div class="a" style="left:878px;top:456.3px;width:136px;height:12.3px;border-bottom:1px solid #e6e6e6"></div>
<div class="a" style="left:878px;top:468.6px;width:136px;height:12.3px;border-bottom:1px solid #e6e6e6"></div>
<div class="a" style="left:942.5px;top:407px;width:1px;height:24.6px;background:#e6e6e6"></div>
<div class="a" style="left:942.5px;top:444px;width:1px;height:43.5px;background:#e6e6e6"></div>
<div class="a" style="left:878px;top:407px;width:64px;height:80.5px;overflow:hidden"><div class="a" style="left:-878px;top:-407px;width:1024px;height:533px">
<div class="t" style="left:880px;top:409.5px">Dosya Adı</div>
<div class="t" style="left:880px;top:421.8px;color:#8d8d8d">Tam Yol</div>
<div class="t" style="left:880px;top:446.8px">Çıkış Dizinine Kopyala</div>
<div class="t" style="left:880px;top:459.2px">Derleme Eylemi</div>
<div class="t" style="left:880px;top:471.5px">Özel Araç</div>
<div class="t" style="left:880px;top:483.5px">Özel Araç İsim Us</div>
</div></div>
<div class="a" style="left:943.5px;top:407px;width:67px;height:80.5px;overflow:hidden"><div class="a" style="left:-943.5px;top:-407px;width:1024px;height:533px">
<div class="t" style="left:944.5px;top:409.5px">AndroidManifest.xml</div>
<div class="t" style="left:944.5px;top:421.8px;color:#8d8d8d">D:\Belgeler\Visual Studio</div>
<div class="t" style="left:944.5px;top:446.8px">Kopyalama</div>
<div class="t" style="left:944.5px;top:459.2px">Yok</div>
</div></div>
<div class="a" style="left:869px;top:487.5px;width:153px;height:0;border-top:1px solid #e2e3ea"></div>
<div class="a" style="left:1011px;top:394.5px;width:11px;height:93px;background:#f5f5f5"></div>
<svg style="left:1012.5px;top:398px" width="6" height="4" viewBox="0 0 6 4"><path d="M0 4 L3 0 L6 4 Z" fill="#999"/></svg>
<div class="a" style="left:1012.9px;top:405.3px;width:5.5px;height:62.3px;background:#c2c3c9"></div>
<svg style="left:1012.5px;top:479.5px" width="6" height="4" viewBox="0 0 6 4"><path d="M0 0 L3 4 L6 0 Z" fill="#999"/></svg>
<div class="t" style="left:873px;top:494.5px;font-weight:bold">Diğer</div>

</body></html>
